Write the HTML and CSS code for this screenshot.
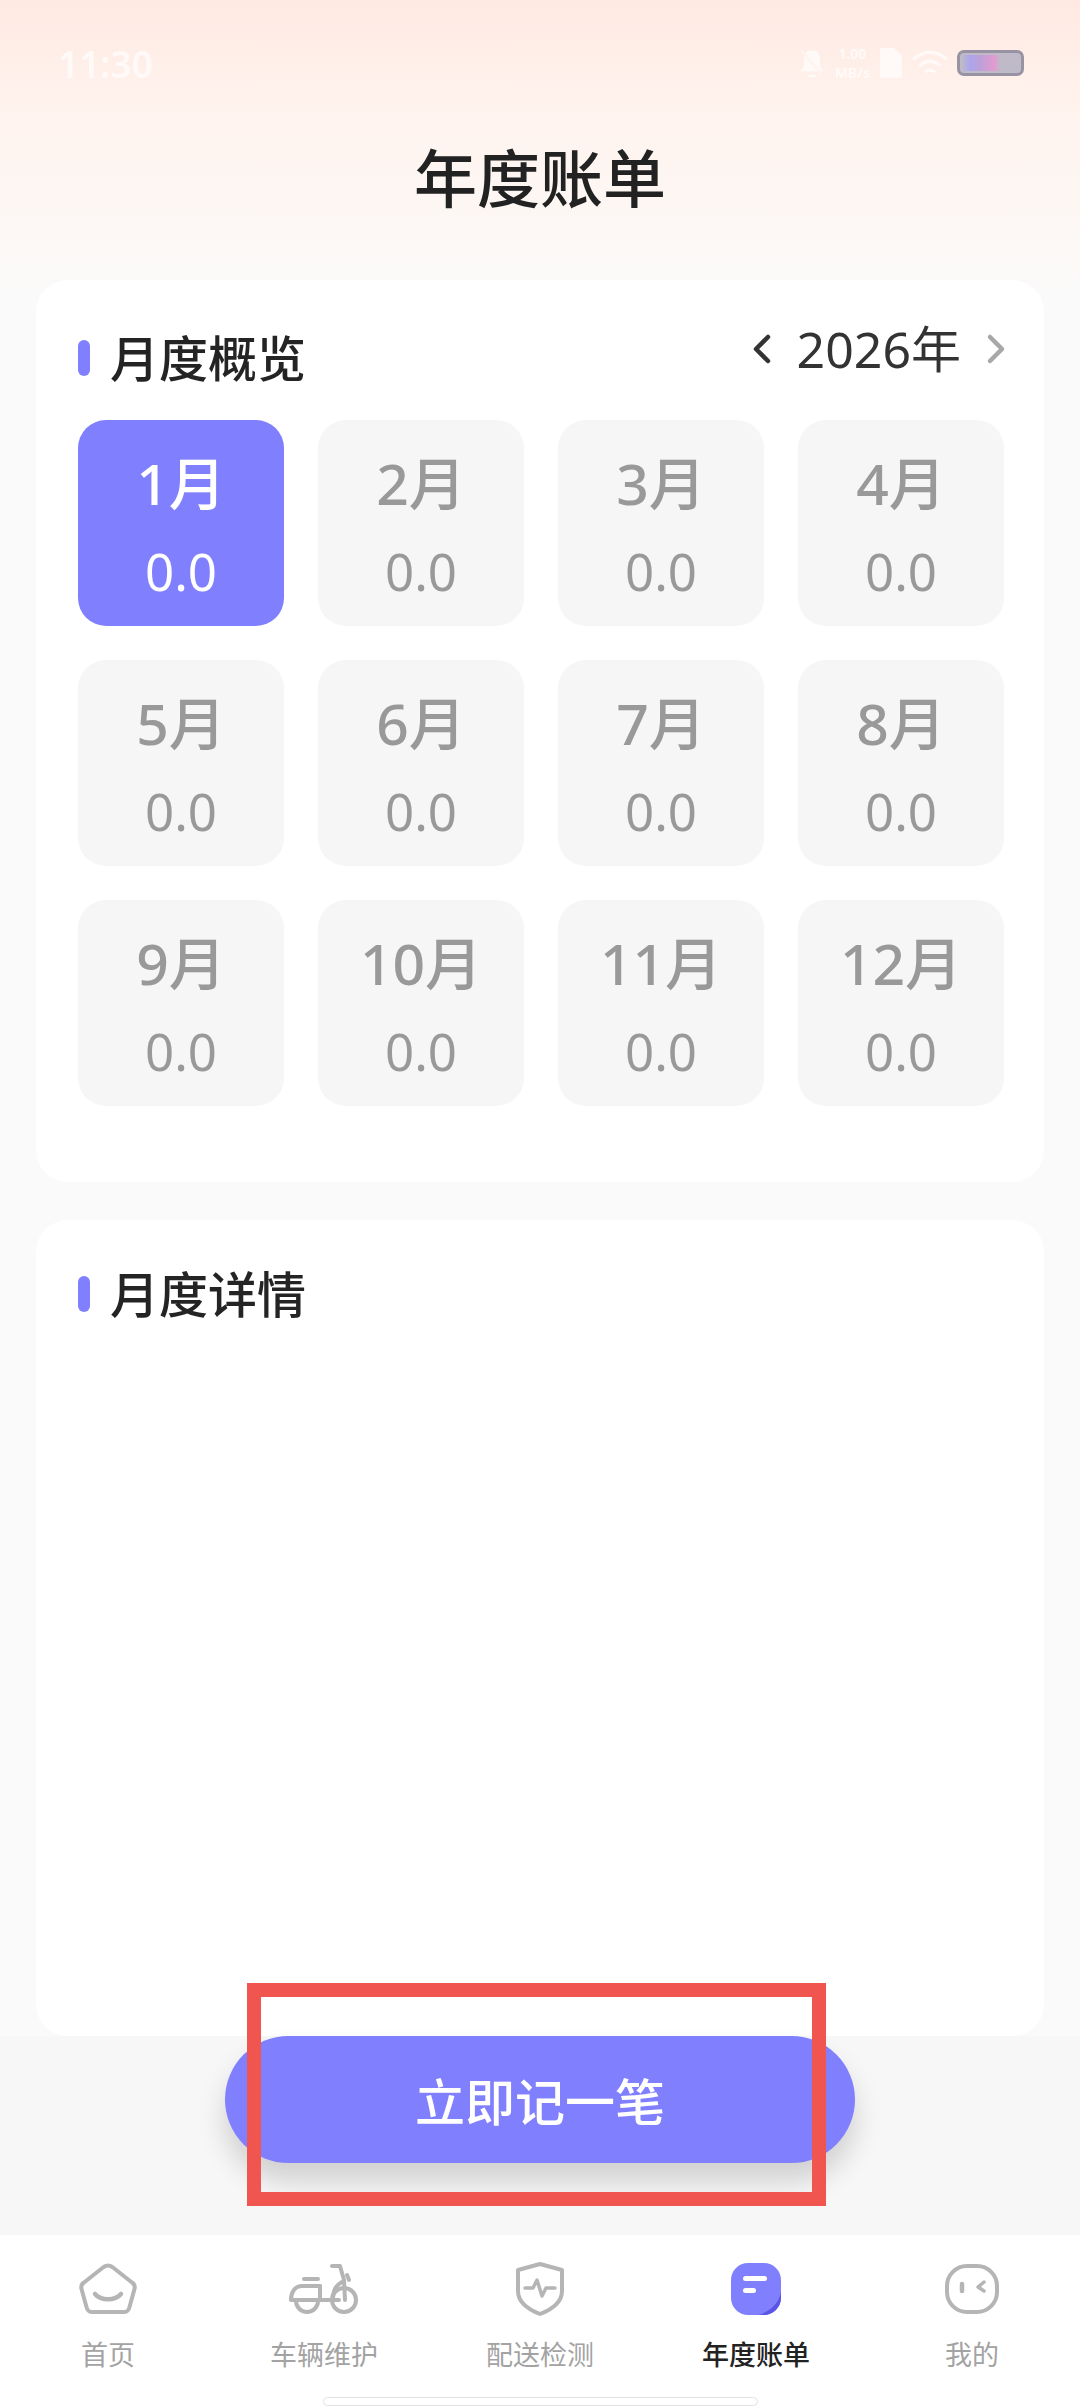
FILE: index.html
```html
<!DOCTYPE html>
<html lang="zh-CN">
<head>
    <meta charset="UTF-8">
    <meta name="viewport" content="width=device-width, initial-scale=1.0">
    <title>年度账单</title>
    <link rel="stylesheet" href="styles.css">
</head>
<body>
    <div class="status-bar">
        <span class="clock">11:30</span>
        <div class="status-icons">
            <svg class="st-bell" viewBox="0 0 24 28"><path d="M12 3c-4 0-7 3-7 7v7l-3 4h20l-3-4v-7c0-4-3-7-7-7z M9 24h6v2H9z" fill="#fff"/><path d="M3 3l18 22" stroke="#fff6f2" stroke-width="2"/></svg>
            <span class="speed">1.00<br>MB/s</span>
            <svg class="st-file" viewBox="0 0 24 32"><path d="M3 1h12l8 8v20a2 2 0 0 1-2 2H3a2 2 0 0 1-2-2V3a2 2 0 0 1 2-2z" fill="#fff"/></svg>
            <svg class="st-wifi" viewBox="0 0 34 26" fill="none" stroke="#fff" stroke-width="3" stroke-linecap="round"><path d="M2 9c9-8 21-8 30 0"/><path d="M8 15c6-5 12-5 18 0"/><path d="M13 21c3-2 5-2 8 0"/></svg>
            <div class="battery"><div class="battery-fill"></div></div>
        </div>
    </div>

    <h1 class="page-title">年度账单</h1>

    <section class="card overview">
        <div class="card-head">
            <div class="section-title"><i class="accent"></i><span>月度概览</span></div>
            <div class="year-picker">
                <svg class="chevron" viewBox="0 0 22 32" fill="none" stroke="#333" stroke-width="4.5" stroke-linecap="round" stroke-linejoin="round"><path d="M17 4L5 16l12 12"/></svg>
                <span class="year">2026年</span>
                <svg class="chevron" viewBox="0 0 22 32" fill="none" stroke="#a8a8a8" stroke-width="4.5" stroke-linecap="round" stroke-linejoin="round"><path d="M5 4l12 12L5 28"/></svg>
            </div>
        </div>
        <div class="month-grid">
            <div class="month active"><b>1月</b><span>0.0</span></div>
            <div class="month"><b>2月</b><span>0.0</span></div>
            <div class="month"><b>3月</b><span>0.0</span></div>
            <div class="month"><b>4月</b><span>0.0</span></div>
            <div class="month"><b>5月</b><span>0.0</span></div>
            <div class="month"><b>6月</b><span>0.0</span></div>
            <div class="month"><b>7月</b><span>0.0</span></div>
            <div class="month"><b>8月</b><span>0.0</span></div>
            <div class="month"><b>9月</b><span>0.0</span></div>
            <div class="month"><b>10月</b><span>0.0</span></div>
            <div class="month"><b>11月</b><span>0.0</span></div>
            <div class="month"><b>12月</b><span>0.0</span></div>
        </div>
    </section>

    <section class="card details">
        <div class="section-title"><i class="accent"></i><span>月度详情</span></div>
    </section>

    <div class="action-area">
        <button class="record-btn">立即记一笔</button>
        <div class="highlight"></div>
    </div>

    <nav class="tabbar">
        <div class="tabs">
            <div class="tab">
                <svg class="icon" width="60" height="52" viewBox="0 0 60 52" fill="none" stroke="#b5b5b5" stroke-width="4" stroke-linecap="round" stroke-linejoin="round">
                    <path d="M25 4.500a7 7 0 0 1 10 0l19 15a6 6 0 0 1 2.500 6.500l-5 18a6 6 0 0 1-6 5H14.500a6 6 0 0 1-6-5l-5-18a6 6 0 0 1 2.500-6.500z"/>
                    <path d="M17 31c6 7 20 7 26 0" stroke-width="4.500"/>
                </svg>
                <span>首页</span>
            </div>
            <div class="tab">
                <svg class="icon" width="70" height="50" viewBox="0 0 70 50" fill="none" stroke="#b5b5b5" stroke-width="4" stroke-linecap="round" stroke-linejoin="round">
                    <path d="M15 15h14"/>
                    <path d="M31 22H13C6 22 2 28 2 36h48"/>
                    <path d="M31 22v14"/>
                    <path d="M7 37a11 11 0 0 0 22 0"/>
                    <circle cx="55" cy="36" r="12"/>
                    <path d="M43 2h8l4 14 1 20"/>
                    <path d="M44 36c0-9 2-14 9-18"/>
                    <path d="M58 11l2 5"/>
                </svg>
                <span>车辆维护</span>
            </div>
            <div class="tab">
                <svg class="icon" width="52" height="56" viewBox="0 0 52 56" fill="none" stroke="#b5b5b5" stroke-width="4" stroke-linecap="round" stroke-linejoin="round">
                    <path d="M26 3l22 6v21c0 11-9 18-22 23C13 48 4 41 4 30V9z"/>
                    <path d="M11 27h8l4-8 5 16 4-8h9" stroke-width="3.500"/>
                </svg>
                <span>配送检测</span>
            </div>
            <div class="tab current">
                <svg class="icon" width="52" height="54" viewBox="0 0 52 54">
                    <rect x="1" y="1" width="50" height="52" rx="17" fill="#8080ff"/>
                    <path d="M51 30v6c0 9-8 17-17 17H28c12-3 21-12 23-23z" fill="#5a55e6"/>
                    <rect x="13" y="14" width="24" height="5" rx="2.500" fill="#fff"/>
                    <rect x="13" y="26" width="13" height="5" rx="2.500" fill="#fff"/>
                </svg>
                <span>年度账单</span>
            </div>
            <div class="tab">
                <svg class="icon" width="54" height="50" viewBox="0 0 54 50" fill="none" stroke="#b5b5b5" stroke-width="4" stroke-linecap="round" stroke-linejoin="round">
                    <rect x="2" y="2" width="50" height="46" rx="20"/>
                    <path d="M17 20v7" stroke-width="4.500"/>
                    <path d="M39 18l-6 5 6 4" stroke-width="3.500"/>
                </svg>
                <span>我的</span>
            </div>
        </div>
        <div class="home-bar"></div>
    </nav>
</body>
</html>
```

FILE: styles.css
```css
* {
    box-sizing: border-box;
}
body {
    margin: 0;
    width: 1080px;
    height: 2408px;
    overflow: hidden;
    display: flex;
    flex-direction: column;
    font-family: "Noto Sans", "Noto Sans CJK SC", sans-serif;
    color: #222;
    background: linear-gradient(to bottom, #ffe9e2 0, #fff3ee 110px, #fdf7f4 210px, #fafafa 300px, #fafafa 100%);
}

/* status bar */
.status-bar {
    height: 126px;
    flex: none;
    padding: 0 56px 0 58px;
    display: flex;
    align-items: center;
    justify-content: space-between;
    opacity: .7;
}
.clock {
    color: #fff;
    font-size: 37px;
    font-weight: 600;
}
.status-icons {
    display: flex;
    align-items: center;
    gap: 9px;
}
.st-bell {
    width: 28px;
    height: 34px;
}
.speed {
    color: #fff;
    font-size: 14px;
    line-height: 19px;
    font-weight: 700;
    text-align: center;
}
.st-file {
    width: 24px;
    height: 32px;
}
.st-wifi {
    width: 36px;
    height: 28px;
}
.battery {
    width: 67px;
    height: 26px;
    padding: 2px;
    border: 3px solid #6d6d86;
    border-radius: 7px;
    background: #a4a4bb;
}
.battery-fill {
    width: 66%;
    height: 100%;
    background: linear-gradient(to right, #a4a4bb, #8888f0 20%, #a57fd0 50%, #d878c8 85%, #a4a4bb);
}

.page-title {
    height: 104px;
    flex: none;
    margin: 0 0 50px;
    font-size: 63px;
    font-weight: 500;
    line-height: 104px;
    text-align: center;
    color: #222;
}

/* cards */
.card {
    flex: none;
    margin: 0 36px;
    padding: 42px;
    border-radius: 32px;
    background-color: #fff;
}
.overview {
    height: 902px;
}
.details {
    height: 816px;
    margin-top: 38px;
    padding-top: 38px;
}
.card-head {
    display: flex;
    justify-content: space-between;
    margin-bottom: 26px;
}
.section-title {
    height: 72px;
    display: flex;
    align-items: center;
    font-size: 49px;
    font-weight: 500;
    color: #242424;
}
.section-title span {
    padding-bottom: 6px;
}
.accent {
    width: 12px;
    height: 36px;
    margin-right: 20px;
    border-radius: 6px;
    background-color: #8080ff;
}
.year-picker {
    display: flex;
    align-items: center;
    height: 54px;
    margin-right: -5px;
}
.year {
    margin: 0 24px;
    font-size: 50px;
    font-weight: 400;
    line-height: 54px;
    color: #333;
}
.chevron {
    width: 22px;
    height: 32px;
}

/* months */
.month-grid {
    display: grid;
    grid-template-columns: repeat(4, 206px);
    grid-auto-rows: 206px;
    gap: 34px;
}
.month {
    display: flex;
    flex-direction: column;
    align-items: center;
    justify-content: center;
    border-radius: 28px;
    background-color: #f6f6f6;
    color: #999;
}
.month b {
    font-size: 57px;
    font-weight: 500;
    line-height: 80px;
}
.month span {
    margin-top: 15px;
    font-size: 51px;
    line-height: 66px;
}
.month.active {
    background-color: #8080ff;
    color: #fff;
}

/* button */
.action-area {
    position: relative;
    height: 199px;
    flex: none;
    background-color: #f7f7f7;
}
.record-btn {
    display: block;
    width: 630px;
    height: 127px;
    margin: 0 0 0 225px;
    border: none;
    border-radius: 64px;
    background-color: #8080ff;
    box-shadow: 0 18px 28px rgba(0, 0, 0, .16);
    color: #fff;
    font-family: inherit;
    font-size: 50px;
    font-weight: 500;
}
.highlight {
    position: absolute;
    left: 247px;
    top: -53px;
    width: 579px;
    height: 223px;
    border: 14px solid #f0554f;
}

/* bottom tabs */
.tabbar {
    flex: 1;
    padding-top: 26px;
    background-color: #fff;
}
.tabs {
    display: grid;
    grid-template-columns: repeat(5, 216px);
}
.tab {
    display: flex;
    flex-direction: column;
    align-items: center;
    font-size: 27px;
    line-height: 36px;
    color: #a3a3a3;
}
.icon {
    height: 56px;
    margin-bottom: 20px;
}
.tab.current {
    color: #222;
    font-weight: 500;
}
.home-bar {
    width: 435px;
    height: 9px;
    margin: 24px auto 0;
    border: 1px solid #e2e2e2;
    border-radius: 5px;
    background-color: #fff;
}
```
